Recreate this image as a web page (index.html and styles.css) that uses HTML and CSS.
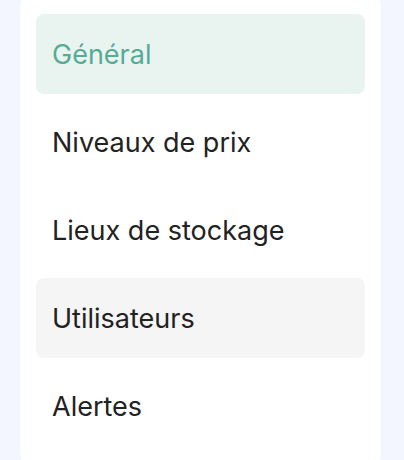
FILE: index.html
```html
<!DOCTYPE html>
<html lang="fr">

<head>
    <meta charset="UTF-8" />
    <meta name="viewport" content="width=device-width, initial-scale=1.0" />
    <title>Paramètres</title>
    <link rel="stylesheet" href="styles.css">
</head>

<body>
    <!-- menu des paramètres -->
    <nav class="settings-menu">
        <a class="menu-item active" href="#">Général</a>
        <a class="menu-item" href="#">Niveaux de prix</a>
        <a class="menu-item" href="#">Lieux de stockage</a>
        <a class="menu-item hover" href="#">Utilisateurs</a>
        <a class="menu-item" href="#">Alertes</a>
    </nav>
</body>

</html>
```
FILE: styles.css
```css
* {
    box-sizing: border-box;
}

body {
    margin: 0;
    background: #f3f6fe;
    font-family: Inter, "Noto Sans", sans-serif;
}

.settings-menu {
    width: 361px;
    margin: -6px 0 0 20px;
    padding: 20px 16px;
    background: #fff;
    border-radius: 12px;
    display: flex;
    flex-direction: column;
    gap: 8px;
}

.menu-item {
    height: 80px;
    padding: 0 16px;
    display: flex;
    align-items: center;
    border-radius: 8px;
    color: #222;
    font-size: 27px;
    text-decoration: none;
}

.menu-item.active {
    background: #e9f4f1;
    color: #57ab94;
}

.menu-item.hover,
.menu-item:hover {
    background: #f5f5f5;
}
```
